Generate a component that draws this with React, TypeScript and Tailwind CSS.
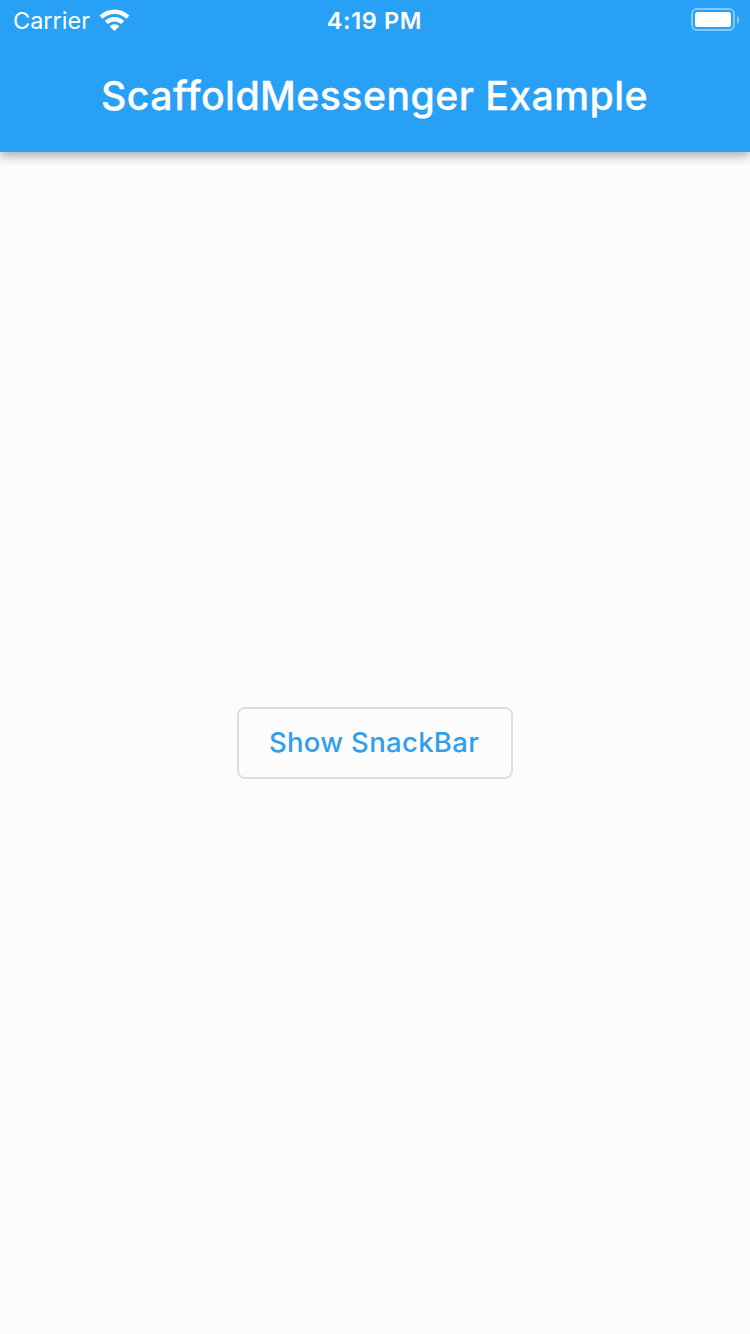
export default function App() {
  return (
    <div className="flex h-[1334px] w-[750px] flex-col overflow-hidden bg-[#fcfcfc] font-['Inter',sans-serif]">
      <header className="relative z-10 h-[152px] bg-[#28a0f6] text-white shadow-[0_4px_10px_rgba(0,0,0,0.32)]">
        <div className="grid h-10 grid-cols-3 items-center">
          <div className="flex items-center gap-[9px] pl-[13px]">
            <span className="pt-0.5 text-[23.5px] leading-[38px]">Carrier</span>
            <svg width="31" height="22" viewBox="0 0 31 22" fill="none" stroke="white" strokeWidth="4.4">
              <path d="M2.1 8.1a19.3 19.3 0 0 1 26.8 0" />
              <path d="M7.3 13.5a12 12 0 0 1 16.4 0" />
              <path d="M15.5 22l-4.9-4.8a7 7 0 0 1 9.8 0z" fill="white" stroke="none" />
            </svg>
          </div>
          <span className="pt-0.5 pr-px text-center text-[23.5px] font-semibold leading-[38px] tracking-[0.65px]">4:19 PM</span>
          <div className="flex justify-end pr-[10px]">
            <svg width="49" height="24" viewBox="0 0 49 24" fill="none">
              <rect x="1" y="1" width="42" height="21" rx="5" stroke="white" strokeOpacity=".42" strokeWidth="2" />
              <rect x="4" y="4" width="36" height="15" rx="2.5" fill="white" />
              <path d="M46 8q2.2 1 2.2 4t-2.2 4z" fill="white" fillOpacity=".45" />
            </svg>
          </div>
        </div>
        <h1 className="pr-px text-center text-[39.25px] font-medium leading-[112px] tracking-[0.42px] [-webkit-text-stroke:0.3px_white] [font-variant-ligatures:none]">ScaffoldMessenger Example</h1>
      </header>
      <main className="flex flex-1 items-center justify-center">
        <button className="h-[72px] w-[276px] rounded-lg border-2 border-[#dedede] pr-0.5 text-[27.5px] font-medium tracking-[0.32px] text-[#309fee]">Show SnackBar</button>
      </main>
    </div>
  );
}
